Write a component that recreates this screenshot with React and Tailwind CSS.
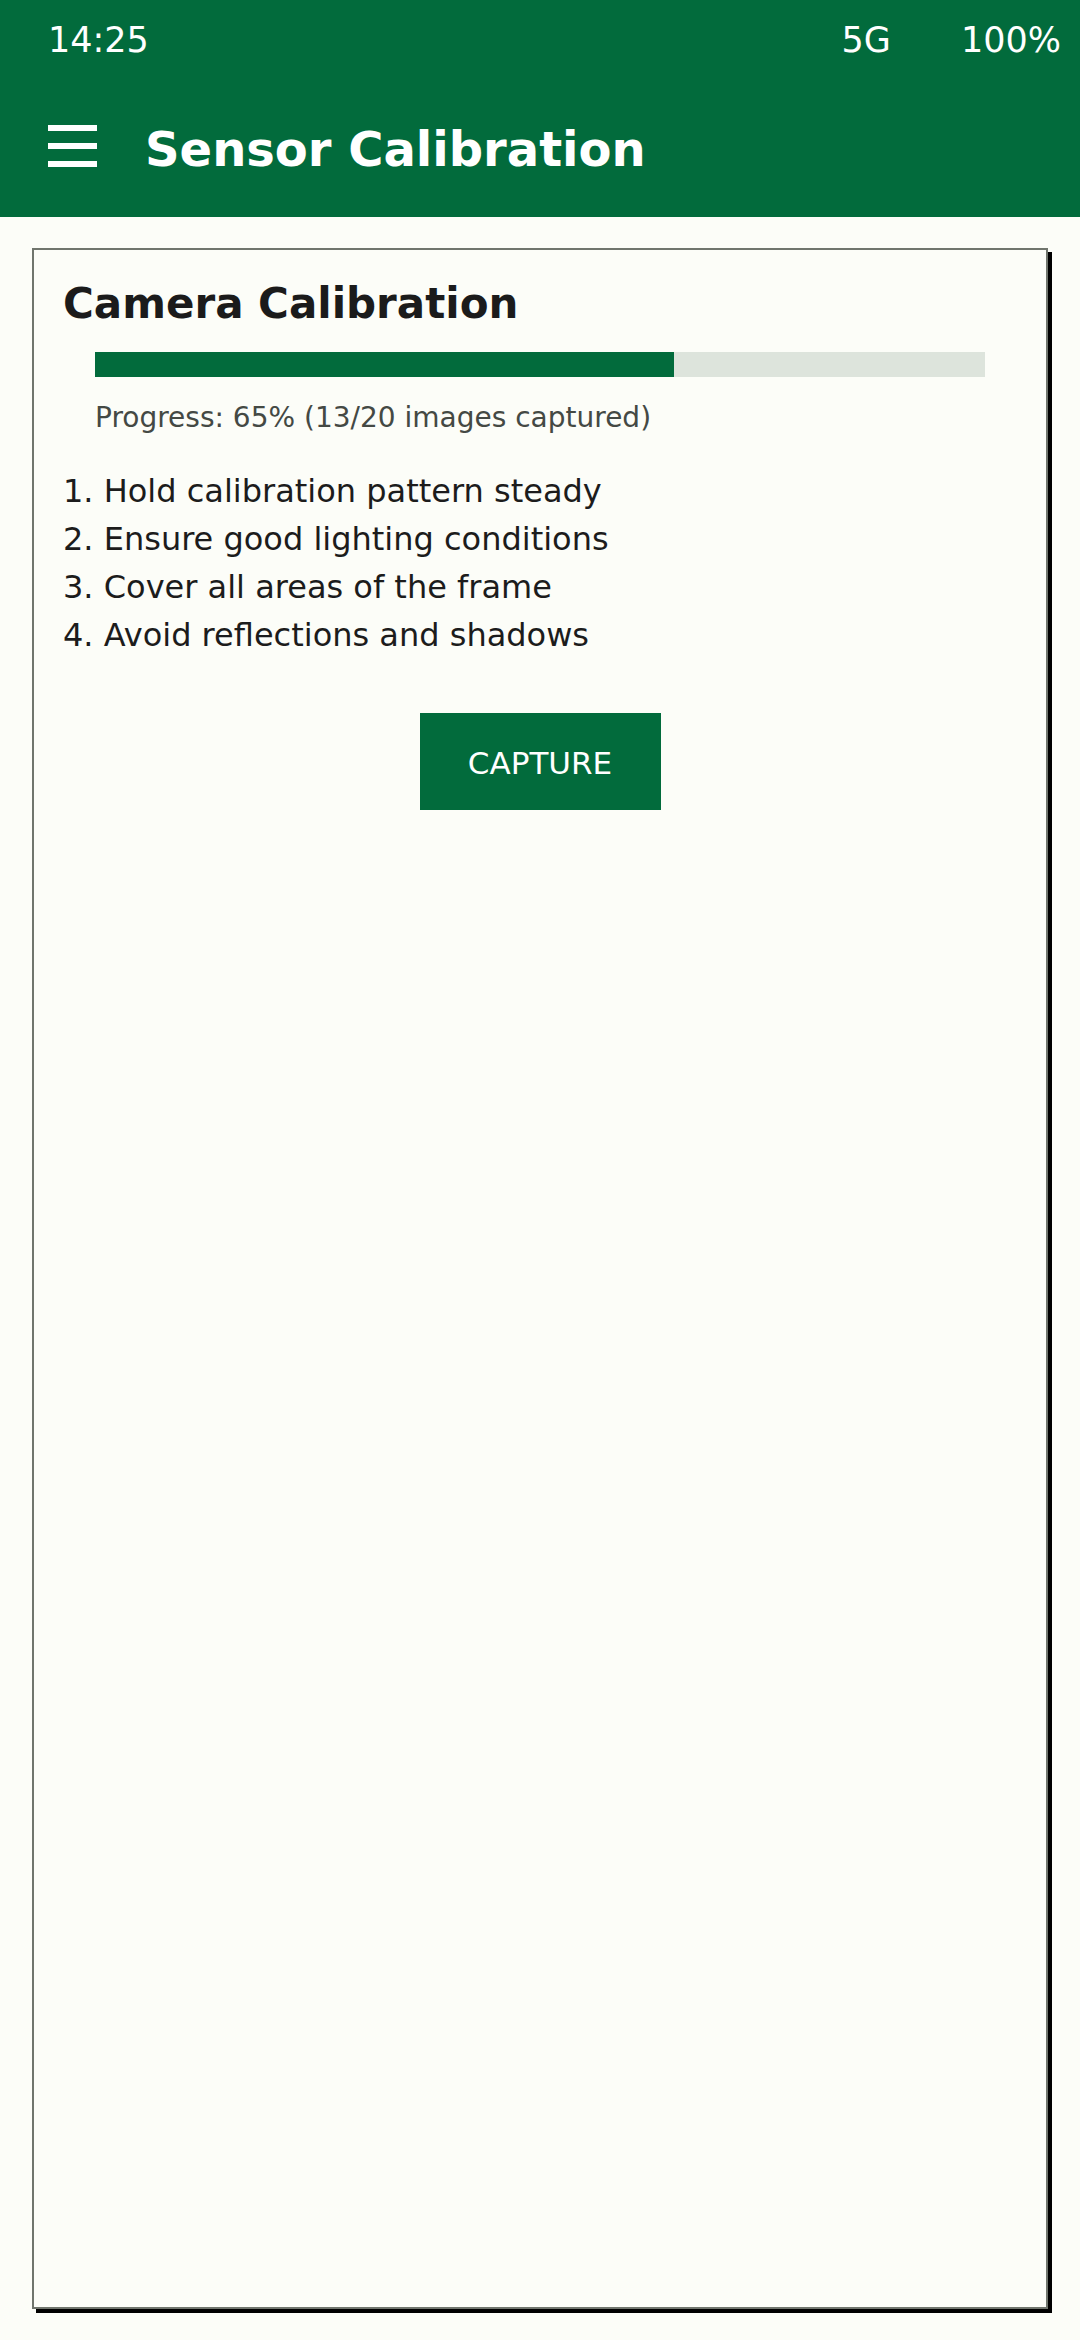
import React from 'react';

const steps = [
  'Hold calibration pattern steady',
  'Ensure good lighting conditions',
  'Cover all areas of the frame',
  'Avoid reflections and shadows',
];

const App = () => {
  const progress = 65;

  return (
    <div className="h-[2340px] w-[1080px] flex flex-col bg-[#fcfdf8] font-['DejaVu_Sans',sans-serif]">
      {/* status bar + app bar */}
      <div className="bg-[#026b3c] text-white">
        <div className="h-20 flex items-center justify-between pl-[48px] pr-[19px] text-[35px] leading-none">
          <span>14:25</span>
          <div className="flex items-center gap-[70px]">
            <span>5G</span>
            <span>100%</span>
          </div>
        </div>
        <div className="h-[137px] flex items-center pl-[48px]">
          <div className="w-[49px] h-[42px] flex flex-col justify-between mb-[6px]">
            <div className="h-[6px] bg-white" />
            <div className="h-[6px] bg-white" />
            <div className="h-[6px] bg-white" />
          </div>
          <h1 className="ml-[48px] text-[48px] font-bold leading-none">Sensor Calibration</h1>
        </div>
      </div>

      {/* card */}
      <div className="flex-1 mx-8 mt-[31px] mb-[31px] border-2 border-[#70756d] bg-[#fcfdf8] shadow-[4px_4px_0_#000] pt-[29px] px-[29px]">
        <h2 className="text-[42px] leading-[50px] font-bold text-[#1b1b1b]">Camera Calibration</h2>

        <div className="mx-8 mt-[23px] h-[25px] bg-[#dde4dc]">
          <div className="h-full bg-[#026b3c]" style={{ width: `${progress}%` }} />
        </div>
        <p className="mx-8 mt-[24px] text-[28px] leading-[33px] text-[#444944]">
          Progress: 65% (13/20 images captured)
        </p>

        <ol className="mt-[33px] text-[32px] leading-[48px] text-[#1c1c1c]">
          {steps.map((s, i) => (
            <li key={i}>{i + 1}. {s}</li>
          ))}
        </ol>

        <div className="flex justify-center mt-[54px]">
          <button className="w-[241px] h-[97px] pt-[4px] bg-[#026b3c] text-white text-[31px] leading-none">CAPTURE</button>
        </div>
      </div>
    </div>
  );
};

export default App;
